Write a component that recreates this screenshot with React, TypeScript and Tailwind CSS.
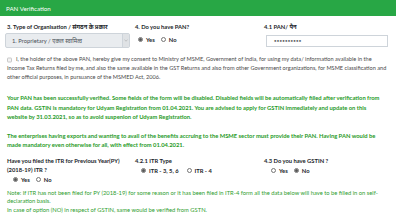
import React from "react";

function Radio({ checked, label }: { checked?: boolean; label: string }) {
  return (
    <label className="flex items-center gap-[3px] font-bold text-[#212529]">
      <span className="flex h-[5px] w-[5px] items-center justify-center rounded-full border-[0.5px] border-[#767676] bg-white">
        {checked && <span className="h-[3px] w-[3px] rounded-full bg-[#555]" />}
      </span>
      {label}
    </label>
  );
}

export default function App() {
  return (
    <div
      className="w-[396px] h-[215px] overflow-hidden bg-white text-[5.8px] leading-[9px] text-[#212529]"
      style={{ fontFamily: 'Lato, "Noto Sans", sans-serif' }}
    >
      <div className="flex h-[16px] items-center bg-[#28a745] px-[6px] text-[6.2px] text-white">
        PAN Verification
      </div>

      {/* row 1 */}
      <div className="mt-[6px] grid grid-cols-3">
        <div className="pl-[5px] pr-[2px]">
          <div className="pl-[2px] font-bold">3. Type of Organisation / संगठन के प्रकार</div>
          <div className="mt-[2px] flex h-[15px] items-center rounded-[2px] border-[0.5px] border-[#ced4da] bg-[#e9ecef] text-[#495057]">
            <span className="flex-1 pl-[6px]">1. Proprietary / एकल स्वामित्व</span>
            <span className="flex h-full w-[7px] items-center justify-center border-l-[0.5px] border-[#ced4da] bg-[#dfe2e5]">
              <svg width="4" height="3" viewBox="0 0 4 3">
                <path d="M0.5 0.8 L2 2.2 L3.5 0.8" stroke="#999" strokeWidth="0.5" fill="none" />
              </svg>
            </span>
          </div>
        </div>
        <div className="pl-[3px]">
          <div className="font-bold">4. Do you have PAN?</div>
          <div className="mt-[4px] flex gap-[6px] pl-[3px]">
            <Radio checked label="Yes" />
            <Radio label="No" />
          </div>
        </div>
        <div>
          <div className="font-bold">4.1 PAN/ पैन</div>
          <div className="mt-[4px] mr-[8px] ml-[2px] flex h-[12px] items-center border-[0.5px] border-[#ced4da] bg-white pl-[7px] font-bold tracking-[0.3px]">
            **********
          </div>
        </div>
      </div>

      {/* consent */}
      <p className="mt-[6px] px-[7px] text-[5.6px] text-[#4a4a4a]">
        <span className="mr-[4px] inline-block h-[5px] w-[5px] translate-y-[0.5px] rounded-[1px] border-[0.5px] border-[#c8c8c8] bg-[#f4f4f4] align-middle" />
        I, the holder of the above PAN, hereby give my consent to Ministry of MSME, Government of India, for using my data/ information available in the Income Tax Returns filed by me, and also the same available in the GST Returns and also from other Government organizations, for MSME classification and other official purposes, in pursuance of the MSMED Act, 2006.
      </p>

      <p className="mt-[12px] pl-[7px] pr-[12px] font-bold leading-[9.6px] text-[#1f9a1f]">
        Your PAN has been successfully verified. Some fields of the form will be disabled. Disabled fields will be automatically filled after verification from PAN data. GSTIN is mandatory for Udyam Registration from 01.04.2021. You are advised to apply for GSTIN immediately and update on this website by 31.03.2021, so as to avoid suspenion of Udyam Registration.
      </p>

      <p className="mt-[9px] px-[7px] font-bold leading-[9.6px] text-[#1f9a1f]">
        The enterprises having exports and wanting to avail of the benefits accruing to the MSME sector must provide their PAN. Having PAN would be made mandatory even otherwise for all, with effect from 01.04.2021.
      </p>

      {/* row 2 */}
      <div className="mt-[6px] grid grid-cols-3">
        <div className="pl-[7px] pr-[4px]">
          <div className="font-bold">Have you filed the ITR for Previous Year(PY) (2018-19) ITR ?</div>
          <div className="mt-[1px] flex gap-[6px] pl-[6px]">
            <Radio checked label="Yes" />
            <Radio label="No" />
          </div>
        </div>
        <div className="pl-[3px]">
          <div className="font-bold">4.2.1 ITR Type</div>
          <div className="mt-[1px] flex gap-[8px] pl-[6px]">
            <Radio checked label="ITR - 3, 5, 6" />
            <Radio label="ITR - 4" />
          </div>
        </div>
        <div>
          <div className="font-bold">4.3 Do you have GSTIN ?</div>
          <div className="mt-[1px] flex gap-[6px] pl-[7px]">
            <Radio label="Yes" />
            <Radio checked label="No" />
          </div>
        </div>
      </div>

      <div className="mt-[5px] px-[7px] leading-[8.5px] text-[#2f9e2f]">
        <p>
          Note: If ITR has not been filed for PY (2018-19) for some reason or it has been filed in ITR-4 form all the data below will have to be filled in on self-declaration basis.
        </p>
        <p>In case of option (NO) in respect of GSTIN, same would be verified from GSTN.</p>
      </div>
    </div>
  );
}
